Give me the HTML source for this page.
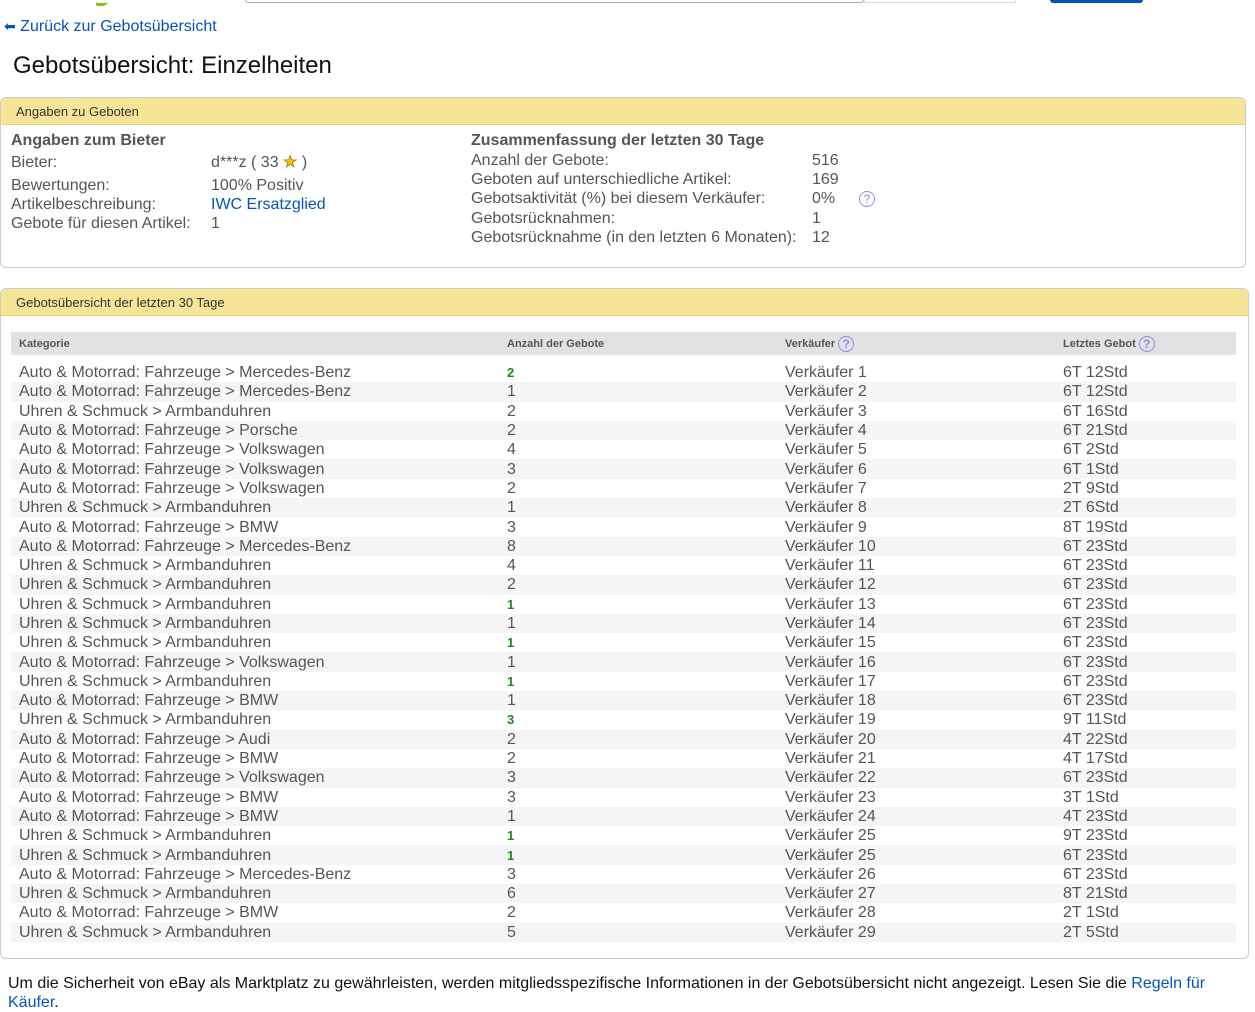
<!DOCTYPE html>
<html><head><meta charset="utf-8"><style>
*{margin:0;padding:0;box-sizing:border-box}
body{width:1255px;height:1006px;overflow:hidden;background:#fff;font-family:"Liberation Sans",Arial,sans-serif;position:relative;color:#555}
.abs{position:absolute}
a{color:#0654ba;text-decoration:none}
.box{position:absolute;border:1px solid #ccc;border-radius:6px;background:#fff}
.hd{background:#f7e597;border-bottom:1px solid #e8d37a;height:27px;border-radius:6px 6px 0 0;font-size:13px;color:#333;padding:6px 0 0 15px}
.lbl{position:absolute;font-size:16px;line-height:19px;white-space:nowrap}
.q{display:inline-block;width:16px;height:16px;border:1px solid #8c8cf0;border-radius:50%;color:#8c8cf0;font-size:12px;line-height:14px;text-align:center;vertical-align:middle}
table{position:absolute;left:11px;top:332px;width:1225px;border-collapse:collapse}
th{background:#e2e2e2;height:23px;font-size:11px;color:#555;text-align:left;font-weight:bold;padding-left:8px}
td{height:19.3px;font-size:16px;line-height:19px;padding:0 0 0 8px;color:#555;white-space:nowrap}
tr.g td{background:#f5f5f5}
td.n{padding-left:495px}
.gr{color:#1a8a1a;font-weight:bold;font-size:13px}
</style></head><body>
<div class="abs" style="left:96px;top:0;width:12px;height:6px;border-bottom:3px solid #86b817;transform:skewX(-30deg);border-radius:0 0 4px 4px"></div>
<div class="abs" style="left:245px;top:-4px;width:619px;height:7px;border:1px solid #aaa;border-radius:3px"></div>
<div class="abs" style="left:864px;top:-4px;width:152px;height:7px;border:1px solid #ddd"></div>
<div class="abs" style="left:1050px;top:-4px;width:93px;height:7px;background:#0654ba;border-radius:3px"></div>
<div class="abs" style="left:4px;top:18px;font-size:16px"><a href="#"><span style="font-size:14px">&#x2B05;</span> Zurück zur Gebotsübersicht</a></div>
<div class="abs" style="left:13px;top:52px;font-size:24px;color:#111">Gebotsübersicht: Einzelheiten</div>

<div class="box" style="left:0;top:97px;width:1246px;height:171px">
<div class="hd">Angaben zu Geboten</div>
</div>
<div class="lbl" style="left:11px;top:131px;font-weight:bold;font-size:16px">Angaben zum Bieter</div>
<div class="lbl" style="left:11px;top:153px">Bieter:</div>
<div class="lbl" style="left:211px;top:153px">d***z ( 33 <span style="color:#f0c800;-webkit-text-stroke:0.6px #776000">★</span> )</div>
<div class="lbl" style="left:11px;top:176px">Bewertungen:</div>
<div class="lbl" style="left:211px;top:176px">100% Positiv</div>
<div class="lbl" style="left:11px;top:195px">Artikelbeschreibung:</div>
<div class="lbl" style="left:211px;top:195px"><a href="#">IWC Ersatzglied</a></div>
<div class="lbl" style="left:11px;top:214px">Gebote für diesen Artikel:</div>
<div class="lbl" style="left:211px;top:214px">1</div>

<div class="lbl" style="left:471px;top:131px;font-weight:bold">Zusammenfassung der letzten 30 Tage</div>
<div class="lbl" style="left:471px;top:151px">Anzahl der Gebote:</div><div class="lbl" style="left:812px;top:151px">516</div>
<div class="lbl" style="left:471px;top:170px">Geboten auf unterschiedliche Artikel:</div><div class="lbl" style="left:812px;top:170px">169</div>
<div class="lbl" style="left:471px;top:189px">Gebotsaktivität (%) bei diesem Verkäufer:</div><div class="lbl" style="left:812px;top:189px">0%</div>
<div class="abs" style="left:859px;top:190px"><span class="q">?</span></div>
<div class="lbl" style="left:471px;top:209px">Gebotsrücknahmen:</div><div class="lbl" style="left:812px;top:209px">1</div>
<div class="lbl" style="left:471px;top:228px">Gebotsrücknahme (in den letzten 6 Monaten):</div><div class="lbl" style="left:812px;top:228px">12</div>

<div class="box" style="left:0;top:288px;width:1249px;height:671px">
<div class="hd">Gebotsübersicht der letzten 30 Tage</div>
</div>
<table>
<tr><th style="width:488px">Kategorie</th><th style="width:278px">Anzahl der Gebote</th><th style="width:278px">Verkäufer <span class="q">?</span></th><th>Letztes Gebot <span class="q">?</span></th></tr>
<tr><td colspan="4" style="height:8px;padding:0"></td></tr>
<tr><td>Auto &amp; Motorrad: Fahrzeuge &gt; Mercedes-Benz</td><td><span class="gr">2</span></td><td>Verkäufer 1</td><td>6T 12Std</td></tr>
<tr class="g"><td>Auto &amp; Motorrad: Fahrzeuge &gt; Mercedes-Benz</td><td>1</td><td>Verkäufer 2</td><td>6T 12Std</td></tr>
<tr><td>Uhren &amp; Schmuck &gt; Armbanduhren</td><td>2</td><td>Verkäufer 3</td><td>6T 16Std</td></tr>
<tr class="g"><td>Auto &amp; Motorrad: Fahrzeuge &gt; Porsche</td><td>2</td><td>Verkäufer 4</td><td>6T 21Std</td></tr>
<tr><td>Auto &amp; Motorrad: Fahrzeuge &gt; Volkswagen</td><td>4</td><td>Verkäufer 5</td><td>6T 2Std</td></tr>
<tr class="g"><td>Auto &amp; Motorrad: Fahrzeuge &gt; Volkswagen</td><td>3</td><td>Verkäufer 6</td><td>6T 1Std</td></tr>
<tr><td>Auto &amp; Motorrad: Fahrzeuge &gt; Volkswagen</td><td>2</td><td>Verkäufer 7</td><td>2T 9Std</td></tr>
<tr class="g"><td>Uhren &amp; Schmuck &gt; Armbanduhren</td><td>1</td><td>Verkäufer 8</td><td>2T 6Std</td></tr>
<tr><td>Auto &amp; Motorrad: Fahrzeuge &gt; BMW</td><td>3</td><td>Verkäufer 9</td><td>8T 19Std</td></tr>
<tr class="g"><td>Auto &amp; Motorrad: Fahrzeuge &gt; Mercedes-Benz</td><td>8</td><td>Verkäufer 10</td><td>6T 23Std</td></tr>
<tr><td>Uhren &amp; Schmuck &gt; Armbanduhren</td><td>4</td><td>Verkäufer 11</td><td>6T 23Std</td></tr>
<tr class="g"><td>Uhren &amp; Schmuck &gt; Armbanduhren</td><td>2</td><td>Verkäufer 12</td><td>6T 23Std</td></tr>
<tr><td>Uhren &amp; Schmuck &gt; Armbanduhren</td><td><span class="gr">1</span></td><td>Verkäufer 13</td><td>6T 23Std</td></tr>
<tr class="g"><td>Uhren &amp; Schmuck &gt; Armbanduhren</td><td>1</td><td>Verkäufer 14</td><td>6T 23Std</td></tr>
<tr><td>Uhren &amp; Schmuck &gt; Armbanduhren</td><td><span class="gr">1</span></td><td>Verkäufer 15</td><td>6T 23Std</td></tr>
<tr class="g"><td>Auto &amp; Motorrad: Fahrzeuge &gt; Volkswagen</td><td>1</td><td>Verkäufer 16</td><td>6T 23Std</td></tr>
<tr><td>Uhren &amp; Schmuck &gt; Armbanduhren</td><td><span class="gr">1</span></td><td>Verkäufer 17</td><td>6T 23Std</td></tr>
<tr class="g"><td>Auto &amp; Motorrad: Fahrzeuge &gt; BMW</td><td>1</td><td>Verkäufer 18</td><td>6T 23Std</td></tr>
<tr><td>Uhren &amp; Schmuck &gt; Armbanduhren</td><td><span class="gr">3</span></td><td>Verkäufer 19</td><td>9T 11Std</td></tr>
<tr class="g"><td>Auto &amp; Motorrad: Fahrzeuge &gt; Audi</td><td>2</td><td>Verkäufer 20</td><td>4T 22Std</td></tr>
<tr><td>Auto &amp; Motorrad: Fahrzeuge &gt; BMW</td><td>2</td><td>Verkäufer 21</td><td>4T 17Std</td></tr>
<tr class="g"><td>Auto &amp; Motorrad: Fahrzeuge &gt; Volkswagen</td><td>3</td><td>Verkäufer 22</td><td>6T 23Std</td></tr>
<tr><td>Auto &amp; Motorrad: Fahrzeuge &gt; BMW</td><td>3</td><td>Verkäufer 23</td><td>3T 1Std</td></tr>
<tr class="g"><td>Auto &amp; Motorrad: Fahrzeuge &gt; BMW</td><td>1</td><td>Verkäufer 24</td><td>4T 23Std</td></tr>
<tr><td>Uhren &amp; Schmuck &gt; Armbanduhren</td><td><span class="gr">1</span></td><td>Verkäufer 25</td><td>9T 23Std</td></tr>
<tr class="g"><td>Uhren &amp; Schmuck &gt; Armbanduhren</td><td><span class="gr">1</span></td><td>Verkäufer 25</td><td>6T 23Std</td></tr>
<tr><td>Auto &amp; Motorrad: Fahrzeuge &gt; Mercedes-Benz</td><td>3</td><td>Verkäufer 26</td><td>6T 23Std</td></tr>
<tr class="g"><td>Uhren &amp; Schmuck &gt; Armbanduhren</td><td>6</td><td>Verkäufer 27</td><td>8T 21Std</td></tr>
<tr><td>Auto &amp; Motorrad: Fahrzeuge &gt; BMW</td><td>2</td><td>Verkäufer 28</td><td>2T 1Std</td></tr>
<tr class="g"><td>Uhren &amp; Schmuck &gt; Armbanduhren</td><td>5</td><td>Verkäufer 29</td><td>2T 5Std</td></tr>
</table>
<div class="abs" style="left:8px;top:974px;width:1220px;font-size:16px;line-height:19px;color:#111">Um die Sicherheit von eBay als Marktplatz zu gewährleisten, werden mitgliedsspezifische Informationen in der Gebotsübersicht nicht angezeigt. Lesen Sie die <a href="#">Regeln für Käufer</a>.</div>
</body></html>
